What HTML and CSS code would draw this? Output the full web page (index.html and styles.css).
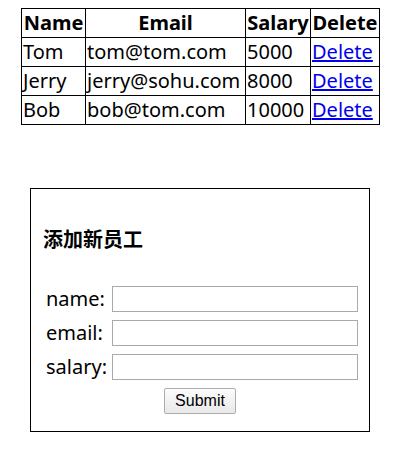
FILE: index.html
```html
<!DOCTYPE html>
<html lang="zh">
<head>
<meta charset="utf-8">
<title>员工列表</title>
<link rel="stylesheet" href="styles.css">
</head>
<body>
<table class="emp">
  <thead>
    <tr><th class="c-name">Name</th><th class="c-email">Email</th><th class="c-salary">Salary</th><th class="c-del">Delete</th></tr>
  </thead>
  <tbody>
    <tr><td>Tom</td><td>tom@tom.com</td><td>5000</td><td><a href="#">Delete</a></td></tr>
    <tr><td>Jerry</td><td>jerry@sohu.com</td><td>8000</td><td><a href="#">Delete</a></td></tr>
    <tr><td>Bob</td><td>bob@tom.com</td><td>10000</td><td><a href="#">Delete</a></td></tr>
  </tbody>
</table>

<div class="box">
  <h3 class="title">添加新员工</h3>
  <form class="add-form">
    <div class="fields">
      <label class="lbl" for="f-name">name:</label><input class="inp" id="f-name" type="text">
      <label class="lbl" for="f-email">email:</label><input class="inp" id="f-email" type="text">
      <label class="lbl" for="f-salary">salary:</label><input class="inp" id="f-salary" type="text">
    </div>
    <div class="actions"><button class="btn" type="button">Submit</button></div>
  </form>
</div>
</body>
</html>
```
FILE: styles.css
```css
html, body {
  margin: 0;
  padding: 0;
  background: #fff;
}
body {
  font-family: "Noto Sans", "Noto Sans CJK SC", sans-serif;
  font-size: 20px;
  color: #000;
}
.emp {
  border-collapse: collapse;
  margin: 8px 0 0 21px;
}
.emp th, .emp td {
  border: 1px solid #000;
  padding: 0 1px;
  line-height: 28px;
  white-space: nowrap;
}
.emp th {
  font-weight: bold;
  text-align: center;
}
.emp td {
  text-align: left;
}
.c-name { width: 61px; }
.c-email { width: 157px; }
.c-salary { width: 62px; }
.c-del { width: 66px; }
.emp a {
  color: #0000ee;
  text-decoration: underline;
}
.box {
  width: 338px;
  border: 1px solid #000;
  margin: 63px 0 0 30px;
  padding: 41px 0 17px 0;
}
.title {
  margin: 0 0 36px 12px;
  font-size: 20px;
  line-height: 20px;
  font-weight: bold;
}
.add-form {
  margin: 0;
}
.fields {
  display: grid;
  grid-template-columns: 62px 246px;
  column-gap: 4px;
  row-gap: 8px;
  align-items: center;
  margin-left: 15px;
}
.lbl {
  line-height: 26px;
  white-space: nowrap;
}
.inp {
  box-sizing: border-box;
  width: 246px;
  height: 26px;
  margin: 0;
  border: 1px solid #a9a9a9;
  background: #fff;
  padding: 2px 3px;
  font: 16px "Liberation Sans", sans-serif;
}
.actions {
  display: flex;
  justify-content: center;
  margin-top: 8px;
}
.btn {
  box-sizing: border-box;
  width: 72px;
  height: 26px;
  margin: 0;
  padding: 0;
  border: 1px solid #adadad;
  border-radius: 2px;
  background: linear-gradient(#fcfcfc, #e8e8e8);
  font: 16px "Liberation Sans", Arial, sans-serif;
  color: #000;
}
```
